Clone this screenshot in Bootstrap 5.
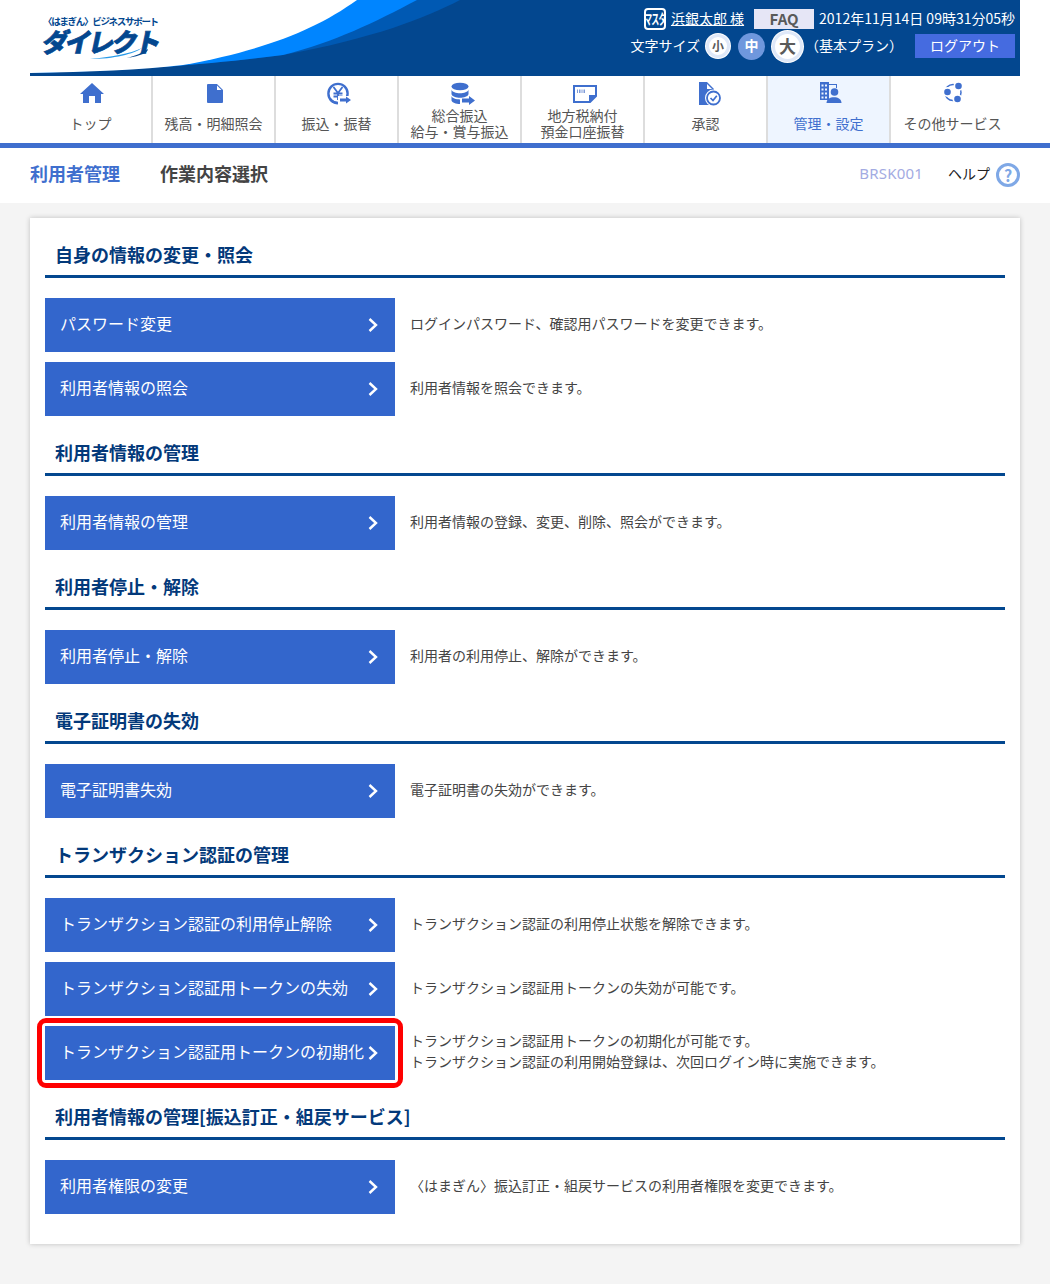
<!DOCTYPE html>
<html lang="ja">
<head>
  <meta charset="UTF-8" />
  <title>ビジネスサポートダイレクト</title>
  <link href="https://cdn.jsdelivr.net/npm/bootstrap@5.3.3/dist/css/bootstrap.min.css" rel="stylesheet" />
  <style>
    body { font-family: "Noto Sans CJK JP", "Noto Sans", sans-serif; background: #f4f4f4; color: #444; font-size: 14px; }
    .top-area { background: #fff; }
    .page-wrap { width: 990px; margin-left: 30px; }

    /* header */
    .site-head { height: 76px; background: #03478f; position: relative; overflow: hidden; }
    .swoosh { position: absolute; left: 0; top: 0; }
    .logo-box { position: relative; padding: 14px 0 0 13px; color: #03478f; width: 150px; }
    .logo-sub { font-size: 9.5px; letter-spacing: -1.3px; font-weight: 700; line-height: 14px; white-space: nowrap; }
    .logo-main { font-size: 26px; font-weight: 900; line-height: 28px; letter-spacing: -2.8px; transform: skewX(-12deg); transform-origin: left bottom; margin: -1px 0 0 -3px; white-space: nowrap; -webkit-text-stroke: .7px #03478f; }
    .logo-arc { position: absolute; left: 60px; top: 46px; }
    .head-right { position: relative; padding: 9px 5px 0 0; color: #fff; }
    .head-row1 { height: 20px; }
    .head-row2 { height: 30px; margin-top: 2px; }
    .ms-badge { width: 22px; height: 22px; margin-right: 1px; border: 2px solid #fff; border-radius: 4px; overflow: hidden; font-size: 8px; font-weight: 700; letter-spacing: -.8px; color: #fff; }
    .ms-badge span { display: block; transform: scaleY(1.7); white-space: nowrap; }
    .user-name { color: #fff; text-decoration: underline; margin-left: 4px; margin-right: 10px; padding-bottom: 2px; white-space: nowrap; }
    .faq-btn { width: 60px; height: 20px; background: #e6e6f6; color: #5a5a5a; font-size: 15px; font-weight: 700; line-height: 19px; text-align: center; text-decoration: none; }
    .now-time { margin-left: 5px; padding-bottom: 2px; white-space: nowrap; }
    .size-label { padding-bottom: 2px; }
    .size-dot { border-radius: 50%; font-weight: 700; color: #5a5a5a; background: #fff; box-shadow: inset 0 0 0 3px #dfe8f8, 0 0 0 1px #fff; padding-bottom: 1px; }
    .size-s { width: 24px; height: 24px; font-size: 12px; margin-left: 6px; }
    .size-m { width: 27px; height: 27px; font-size: 14px; margin-left: 8px; color: #fff; background: #6f97dd; box-shadow: none; }
    .size-l { width: 31px; height: 31px; font-size: 17px; margin-left: 7px; }
    .plan-name { margin-left: 2px; margin-right: 12px; padding-bottom: 2px; white-space: nowrap; }
    .logout-btn { width: 100px; height: 24px; line-height: 20px; padding: 0 0 2px; font-size: 14px; color: #fff; background: #456be0; border: 0; border-radius: 0; }

    /* global nav */
    .gnav { border-bottom: 5px solid #3f6fce; background: #fff; }
    .gnav-cell { width: 123px; height: 67px; border-right: 2px solid #ddd; text-align: center; color: #555; text-decoration: none; line-height: 16px; }
    .gnav-cell:last-child { border-right: 0; }
    .gnav-cell.on { background: #eef5ff; color: #3f6fce; }
    .gnav-cell svg { display: block; margin: 5px auto 0; }
    .gnav-label { height: 32px; }

    /* title bar */
    .title-bar { height: 55px; padding-bottom: 4px; }
    .title-main { font-size: 18px; font-weight: 700; color: #3f6fce; }
    .title-sub { font-size: 18px; font-weight: 700; color: #444; margin-left: 40px; }
    .screen-id { color: #a3abe2; font-family: "Noto Sans", sans-serif; font-size: 15px; letter-spacing: .2px; margin-right: 25px; }
    .help-link { color: #222; text-decoration: none; margin-right: 6px; }
    .help-mark { width: 24px; height: 24px; margin-top: 2px; border: 3px solid #7fa8e6; border-radius: 50%; color: #7fa8e6; font-weight: 700; font-size: 16px; line-height: 1; }

    /* main panel */
    .main-panel { margin-top: 15px; margin-bottom: 40px; padding: 0 15px 30px; border-radius: 0; border: 0; box-shadow: 0 0 5px rgba(0,0,0,.22); }
    .sec-title { height: 60px; margin: 0 0 20px; padding: 26px 0 0 10px; font-size: 18px; line-height: 20px; font-weight: 700; color: #03397a; border-bottom: 3px solid #03478f; }
    .act-row { height: 54px; }
    .act-row + .act-row { margin-top: 10px; }
    .act-btn { width: 350px; height: 54px; flex: none; background: #36c; color: #fff; font-size: 16px; padding: 0 17px 4px 15px; border: 0; border-radius: 0; white-space: nowrap; }
    .act-btn:hover { background: #36c; color: #fff; }
    .act-btn svg { margin-top: 4px; }
    .act-note { margin-left: 15px; padding-bottom: 4px; line-height: 21px; font-size: 14px; color: #444; }
    .act-mark { position: relative; }
    .act-mark::after { content: ""; position: absolute; inset: -8px; border: 5px solid #f00; border-radius: 9px; }
  </style>
</head>
<body>
  <div class="top-area">
    <div class="page-wrap">
      <header class="site-head d-flex justify-content-between">
        <svg class="swoosh" width="990" height="76" viewBox="0 0 990 76">
          <path fill="#0059b3" d="M0 0H430C395 18 345 38 253 55C190 63 120 70 0 73Z" />
          <path fill="#0085ff" d="M0 0H387C345 22 305 42 253 55C190 63 120 70 0 73Z" />
          <path fill="#fff" d="M0 0H327C285 30 235 50 153 65C110 70 60 72 0 73Z" />
        </svg>
        <div class="logo-box">
          <div class="logo-sub">〈はまぎん〉ビジネスサポート</div>
          <div class="logo-main">ダイレクト</div>
          <svg class="logo-arc" width="60" height="14" viewBox="0 0 60 14">
            <path fill="#2a9be8" d="M0 13C20 11 40 8 52 2C44 8 24 13 0 13Z" />
            <path fill="#03478f" d="M36 12C46 10 52 7 58 3C58 6 52 10 36 12Z" />
          </svg>
        </div>
        <div class="head-right">
          <div class="head-row1 d-flex align-items-center justify-content-end">
            <span class="ms-badge d-flex align-items-center justify-content-center"><span>マスタ</span></span>
            <a class="user-name" href="#">浜銀太郎 様</a>
            <a class="faq-btn" href="#">FAQ</a>
            <span class="now-time">2012年11月14日 09時31分05秒</span>
          </div>
          <div class="head-row2 d-flex align-items-center justify-content-end">
            <span class="size-label">文字サイズ</span>
            <span class="size-dot size-s d-flex align-items-center justify-content-center">小</span>
            <span class="size-dot size-m d-flex align-items-center justify-content-center">中</span>
            <span class="size-dot size-l d-flex align-items-center justify-content-center">大</span>
            <span class="plan-name">（基本プラン）</span>
            <button class="btn logout-btn" type="button">ログアウト</button>
          </div>
        </div>
      </header>
    </div>

    <nav class="gnav">
      <div class="page-wrap d-flex">
        <a class="gnav-cell" href="#">
          <svg width="32" height="26" viewBox="-1 0 32 26"><path fill="#3f6fce" d="M16 2L28 13H25V22H19V15H13V22H7V13H4Z" /></svg>
          <div class="gnav-label d-flex align-items-center justify-content-center">トップ</div>
        </a>
        <a class="gnav-cell" href="#">
          <svg width="32" height="26" viewBox="-1 0 32 26"><path fill="#3f6fce" d="M9 3H18L24 9V21A1 1 0 0 1 23 22H9A1 1 0 0 1 8 21V4A1 1 0 0 1 9 3Z" /><path fill="#fff" d="M18 4.5V9H22.5Z" /></svg>
          <div class="gnav-label d-flex align-items-center justify-content-center">残高・明細照会</div>
        </a>
        <a class="gnav-cell" href="#">
          <svg width="32" height="26" viewBox="-1 0 32 26">
            <circle cx="16" cy="12.5" r="9.6" fill="none" stroke="#3f6fce" stroke-width="2.4" />
            <path fill="none" stroke="#3f6fce" stroke-width="1.8" d="M11.5 6L16 12L20.5 6M16 12V19M11.5 12.5H20.5M11.5 15.5H20.5" />
            <path fill="#fff" d="M16 15H31V24H16Z" />
            <path fill="#3f6fce" d="M18 17.5H24V15.5L29 19L24 22.5V20.5H18Z" />
            <path fill="none" stroke="#3f6fce" stroke-width="2.4" d="M8 18C10 20.5 13 22 16 22" />
          </svg>
          <div class="gnav-label d-flex align-items-center justify-content-center">振込・振替</div>
        </a>
        <a class="gnav-cell" href="#">
          <svg width="32" height="26" viewBox="-1 0 32 26">
            <ellipse cx="15" cy="5.5" rx="8.5" ry="3.8" fill="#3f6fce" />
            <path fill="#3f6fce" d="M6.5 8.5C7 11 11 12.2 15 12.2S23 11 23.5 8.5V13C23 15.5 19 16.7 15 16.7S7 15.5 6.5 13Z" />
            <path fill="#3f6fce" d="M6.5 15C7 17.3 11 18.4 15 18.4V23C11 23 7 21.7 6.5 19.5Z" />
            <path fill="#3f6fce" d="M17 17.5H24V15L30 19.5L24 24V21.5H17Z" />
          </svg>
          <div class="gnav-label d-flex align-items-center justify-content-center">総合振込<br />給与・賞与振込</div>
        </a>
        <a class="gnav-cell" href="#">
          <svg width="32" height="26" viewBox="-1 0 32 26">
            <path fill="#fff" stroke="#3f6fce" stroke-width="2" d="M6 5H28V15L22 21H6Z" />
            <path fill="#3f6fce" d="M21 21.5V14H28.5Z" />
            <path fill="#7f9bd8" d="M9 8.5H10V12H9ZM11 8.5H12.5V12H11ZM13.5 8.5H14.5V12H13.5ZM15.5 8.5H17V12H15.5Z" />
          </svg>
          <div class="gnav-label d-flex align-items-center justify-content-center">地方税納付<br />預金口座振替</div>
        </a>
        <a class="gnav-cell" href="#">
          <svg width="32" height="26" viewBox="-1 0 32 26">
            <path fill="#3f6fce" d="M8 1H16L23 8V24H8Z" />
            <path fill="#fff" d="M16 3V8H21Z" />
            <circle cx="22.5" cy="17" r="8.5" fill="#fff" />
            <circle cx="22.5" cy="17" r="6.5" fill="#fff" stroke="#3f6fce" stroke-width="1.8" />
            <path fill="none" stroke="#3f6fce" stroke-width="1.7" d="M19.5 17L22 19.5L25.8 14.8" />
          </svg>
          <div class="gnav-label d-flex align-items-center justify-content-center">承認</div>
        </a>
        <a class="gnav-cell on" href="#">
          <svg width="32" height="26" viewBox="-1 0 32 26">
            <path fill="#3f6fce" d="M6 1H15V3H23V7H22V4H15V19H6Z" />
            <path fill="#eef5ff" d="M7.5 3.5H9.5V5.5H7.5ZM11 3.5H13V5.5H11ZM7.5 7.5H9.5V9.5H7.5ZM11 7.5H13V9.5H11ZM7.5 11.5H9.5V13.5H7.5ZM11 11.5H13V13.5H11ZM7.5 15.5H9.5V17.5H7.5ZM11 15.5H13V17.5H11Z" />
            <circle cx="20.5" cy="11" r="3.8" fill="#3f6fce" />
            <path fill="#3f6fce" d="M12.5 22C12.5 18 16 16.2 20 16.2S27.5 18 27.5 22Z" />
          </svg>
          <div class="gnav-label d-flex align-items-center justify-content-center">管理・設定</div>
        </a>
        <a class="gnav-cell" href="#">
          <svg width="32" height="26" viewBox="0 0 32 26">
            <circle cx="16" cy="11.5" r="8" fill="none" stroke="#3f6fce" stroke-width="1.5" />
            <g fill="#fff">
              <circle cx="21.5" cy="5" r="5" />
              <circle cx="10.5" cy="11" r="5" />
              <circle cx="20.5" cy="18" r="5" />
            </g>
            <g fill="#3f6fce">
              <circle cx="21.5" cy="5" r="3.3" />
              <circle cx="10.5" cy="11" r="3.3" />
              <circle cx="20.5" cy="18" r="3.3" />
            </g>
          </svg>
          <div class="gnav-label d-flex align-items-center justify-content-center">その他サービス</div>
        </a>
      </div>
    </nav>

    <div class="page-wrap title-bar d-flex align-items-center justify-content-between">
      <div class="d-flex align-items-center">
        <span class="title-main">利用者管理</span>
        <span class="title-sub">作業内容選択</span>
      </div>
      <div class="d-flex align-items-center">
        <span class="screen-id">BRSK001</span>
        <a class="help-link" href="#">ヘルプ</a>
        <span class="help-mark d-flex align-items-center justify-content-center">?</span>
      </div>
    </div>
  </div>

  <main class="page-wrap card main-panel">
    <h2 class="sec-title">自身の情報の変更・照会</h2>
    <div class="act-row d-flex align-items-center">
      <a class="btn act-btn d-flex align-items-center justify-content-between" href="#">パスワード変更
        <svg width="10" height="14" viewBox="0 0 10 14"><path fill="none" stroke="#fff" stroke-width="2.4" d="M1.5 1L8 7L1.5 13" /></svg></a>
      <div class="act-note">ログインパスワード、確認用パスワードを変更できます。</div>
    </div>
    <div class="act-row d-flex align-items-center">
      <a class="btn act-btn d-flex align-items-center justify-content-between" href="#">利用者情報の照会
        <svg width="10" height="14" viewBox="0 0 10 14"><path fill="none" stroke="#fff" stroke-width="2.4" d="M1.5 1L8 7L1.5 13" /></svg></a>
      <div class="act-note">利用者情報を照会できます。</div>
    </div>

    <h2 class="sec-title">利用者情報の管理</h2>
    <div class="act-row d-flex align-items-center">
      <a class="btn act-btn d-flex align-items-center justify-content-between" href="#">利用者情報の管理
        <svg width="10" height="14" viewBox="0 0 10 14"><path fill="none" stroke="#fff" stroke-width="2.4" d="M1.5 1L8 7L1.5 13" /></svg></a>
      <div class="act-note">利用者情報の登録、変更、削除、照会ができます。</div>
    </div>

    <h2 class="sec-title">利用者停止・解除</h2>
    <div class="act-row d-flex align-items-center">
      <a class="btn act-btn d-flex align-items-center justify-content-between" href="#">利用者停止・解除
        <svg width="10" height="14" viewBox="0 0 10 14"><path fill="none" stroke="#fff" stroke-width="2.4" d="M1.5 1L8 7L1.5 13" /></svg></a>
      <div class="act-note">利用者の利用停止、解除ができます。</div>
    </div>

    <h2 class="sec-title">電子証明書の失効</h2>
    <div class="act-row d-flex align-items-center">
      <a class="btn act-btn d-flex align-items-center justify-content-between" href="#">電子証明書失効
        <svg width="10" height="14" viewBox="0 0 10 14"><path fill="none" stroke="#fff" stroke-width="2.4" d="M1.5 1L8 7L1.5 13" /></svg></a>
      <div class="act-note">電子証明書の失効ができます。</div>
    </div>

    <h2 class="sec-title">トランザクション認証の管理</h2>
    <div class="act-row d-flex align-items-center">
      <a class="btn act-btn d-flex align-items-center justify-content-between" href="#">トランザクション認証の利用停止解除
        <svg width="10" height="14" viewBox="0 0 10 14"><path fill="none" stroke="#fff" stroke-width="2.4" d="M1.5 1L8 7L1.5 13" /></svg></a>
      <div class="act-note">トランザクション認証の利用停止状態を解除できます。</div>
    </div>
    <div class="act-row d-flex align-items-center">
      <a class="btn act-btn d-flex align-items-center justify-content-between" href="#">トランザクション認証用トークンの失効
        <svg width="10" height="14" viewBox="0 0 10 14"><path fill="none" stroke="#fff" stroke-width="2.4" d="M1.5 1L8 7L1.5 13" /></svg></a>
      <div class="act-note">トランザクション認証用トークンの失効が可能です。</div>
    </div>
    <div class="act-row d-flex align-items-center">
      <a class="btn act-btn act-mark d-flex align-items-center justify-content-between" href="#">トランザクション認証用トークンの初期化
        <svg width="10" height="14" viewBox="0 0 10 14"><path fill="none" stroke="#fff" stroke-width="2.4" d="M1.5 1L8 7L1.5 13" /></svg></a>
      <div class="act-note">トランザクション認証用トークンの初期化が可能です。<br />トランザクション認証の利用開始登録は、次回ログイン時に実施できます。</div>
    </div>

    <h2 class="sec-title">利用者情報の管理[振込訂正・組戻サービス]</h2>
    <div class="act-row d-flex align-items-center">
      <a class="btn act-btn d-flex align-items-center justify-content-between" href="#">利用者権限の変更
        <svg width="10" height="14" viewBox="0 0 10 14"><path fill="none" stroke="#fff" stroke-width="2.4" d="M1.5 1L8 7L1.5 13" /></svg></a>
      <div class="act-note">〈はまぎん〉振込訂正・組戻サービスの利用者権限を変更できます。</div>
    </div>
  </main>

  <script src="https://cdn.jsdelivr.net/npm/bootstrap@5.3.3/dist/js/bootstrap.bundle.min.js"></script>
</body>
</html>
